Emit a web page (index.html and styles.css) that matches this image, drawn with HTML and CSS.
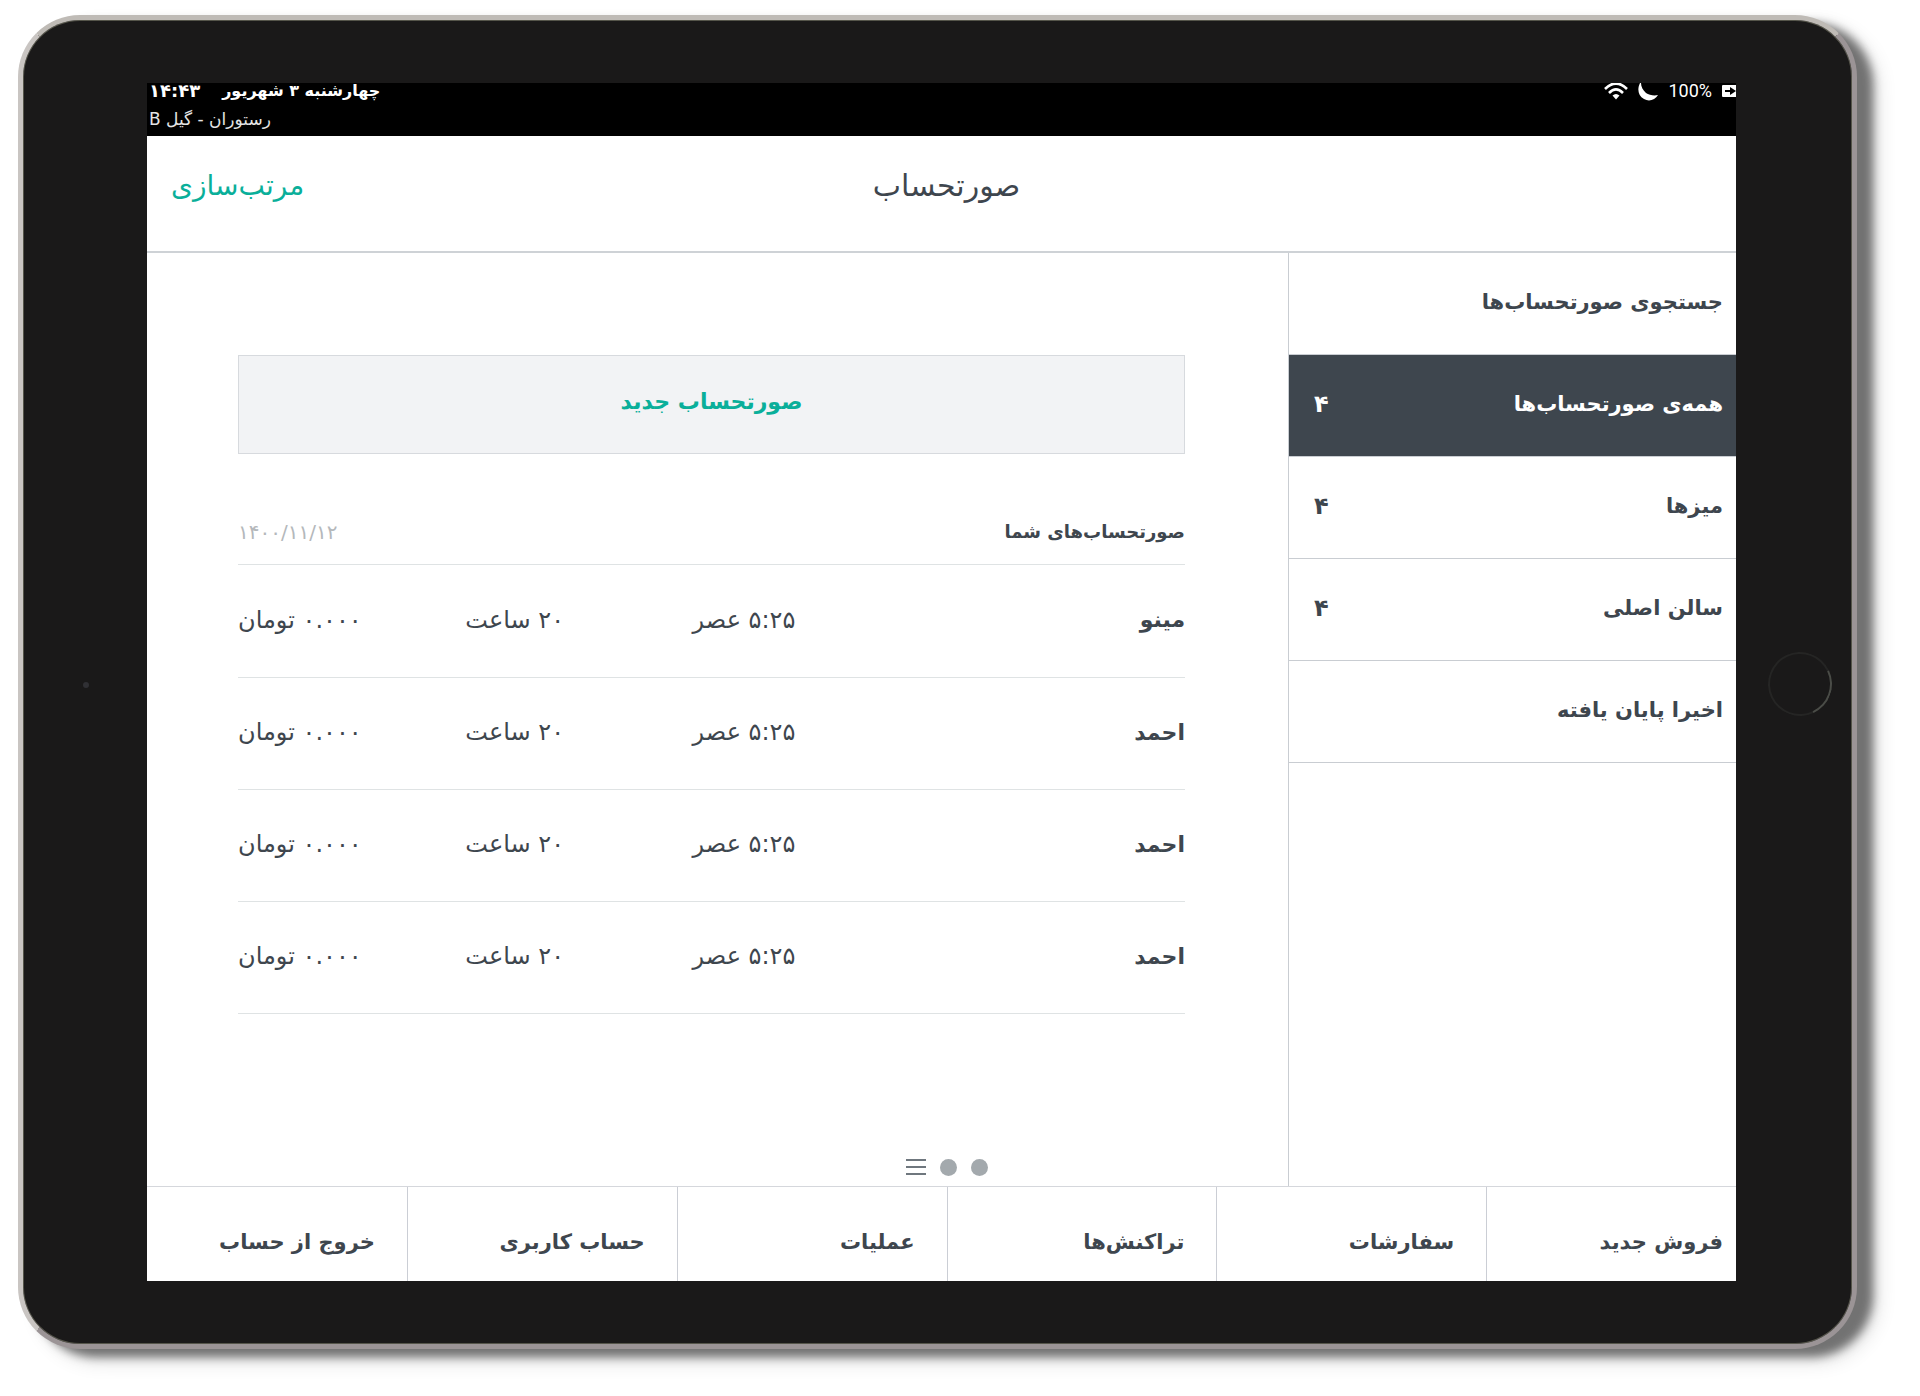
FILE: index.html
```html
<!DOCTYPE html>
<html lang="fa" dir="rtl">
<head>
<meta charset="utf-8">
<meta name="viewport" content="width=device-width, initial-scale=1">
<title>صورتحساب</title>
<link rel="stylesheet" href="styles.css">
</head>
<body>
<div class="tablet">
  <span class="camera"></span>
  <span class="home-button"></span>
  <div class="screen">
    <div class="status">
      <div class="status-icons">
        <svg class="battery" width="14" height="12" viewBox="0 0 14 12"><path fill="#fff" d="M1 0H14V12H1Q0 12 0 11V1Q0 0 1 0Z"/><path fill="#000" d="M3 5H8V2L14 6L8 10V7H3Z"/></svg>
        <span class="percent" dir="ltr">100%</span>
        <svg width="20" height="20" viewBox="0 0 20 20"><path fill="#fff" d="M2 2C-1 8 0 15 6 18C11 21 17 19 20 14C16 15 11 14 8 12C5 9 3 6 3 2Z"/></svg>
        <svg width="24" height="18" viewBox="0 0 24 18"><g fill="none" stroke="#fff" stroke-width="2.6"><path d="M1 7Q12 -4 23 7"/><path d="M5 11Q12 4 19 11"/></g><path fill="#fff" d="M8.500 13.500Q12 10.500 15.500 13.500L12 17.500Z"/></svg>
      </div>
      <div class="status-text">
        <div class="clock"><span>چهارشنبه ۳ شهریور</span><span class="time">۱۴:۴۳</span></div>
        <div class="place">رستوران - گیل B</div>
      </div>
    </div>
    <header class="topbar">
      <h1 class="title">صورتحساب</h1>
      <button class="sort" type="button">مرتب‌سازی</button>
    </header>
    <div class="content">
      <nav class="sidebar">
        <a class="side-item" href="#search">جستجوی صورتحساب‌ها</a>
        <a class="side-item active" href="#all">همه‌ی صورتحساب‌ها <span class="count">۴</span></a>
        <a class="side-item" href="#tables">میزها <span class="count">۴</span></a>
        <a class="side-item" href="#hall">سالن اصلی <span class="count">۴</span></a>
        <a class="side-item" href="#recent">اخیرا پایان یافته</a>
      </nav>
      <main class="main">
        <button class="new-bill" type="button">صورتحساب جدید</button>
        <div class="list-head">
          <h2 class="list-title">صورتحساب‌های شما</h2>
          <span class="list-date">۱۴۰۰/۱۱/۱۲</span>
        </div>
        <table class="bills">
          <tbody>
            <tr><th scope="row">مینو</th><td>۵:۲۵ عصر</td><td>۲۰ ساعت</td><td>۰.۰۰۰ تومان</td></tr>
            <tr><th scope="row">احمد</th><td>۵:۲۵ عصر</td><td>۲۰ ساعت</td><td>۰.۰۰۰ تومان</td></tr>
            <tr><th scope="row">احمد</th><td>۵:۲۵ عصر</td><td>۲۰ ساعت</td><td>۰.۰۰۰ تومان</td></tr>
            <tr><th scope="row">احمد</th><td>۵:۲۵ عصر</td><td>۲۰ ساعت</td><td>۰.۰۰۰ تومان</td></tr>
          </tbody>
        </table>
      </main>
      <div class="pager">
        <span class="dot"></span>
        <span class="dot"></span>
        <svg width="20" height="16" viewBox="0 0 20 16"><path stroke="#6f777e" stroke-width="2" d="M0 1H20M0 8H20M0 15H20"/></svg>
      </div>
    </div>
    <nav class="bottom-nav">
      <a href="#sale">فروش جدید</a>
      <a href="#orders">سفارشات</a>
      <a href="#transactions">تراکنش‌ها</a>
      <a href="#operations">عملیات</a>
      <a href="#account">حساب کاربری</a>
      <a href="#logout">خروج از حساب</a>
    </nav>
  </div>
</div>
</body>
</html>
```
FILE: styles.css
```css
* { box-sizing: border-box; }

body {
  margin: 0;
  padding: 15px 63px 46px 18px;
  background: #fff;
  color: #3e464e;
  font-family: "DejaVu Sans", sans-serif;
}

h1, h2 { margin: 0; }

a { color: inherit; text-decoration: none; }

button { font-family: inherit; cursor: pointer; }

.tablet {
  position: relative;
  padding: 63px 116px 63px 124px;
  border: 5px solid;
  border-color: #bfbbb6 #9b9496 #9b9496 #c9c5c2;
  border-radius: 62px;
  background: #1a1919;
  box-shadow: inset 0 0 0 1px #55554a, 16px 8px 10px #727272, 20px 12px 20px #ddd;
}

.home-button {
  position: absolute;
  top: 50%;
  right: 20px;
  width: 64px;
  height: 64px;
  margin-top: -30px;
  border: 2px solid #252524;
  border-right-color: #4a4c47;
  border-radius: 50%;
  transform: rotate(20deg);
}

.camera {
  position: absolute;
  top: 50%;
  left: 60px;
  width: 6px;
  height: 6px;
  border-radius: 50%;
  background: #303034;
}

.screen { overflow: hidden; background: #fff; }

.status {
  display: flex;
  justify-content: space-between;
  height: 53px;
  background: #000;
  color: #fff;
}

.status-icons {
  display: flex;
  align-items: center;
  gap: 10px;
  height: 16px;
}

.percent { font: 18px/18px Roboto, sans-serif; }

.status-text { padding-left: 2px; text-align: left; }

.clock {
  display: flex;
  justify-content: flex-end;
  gap: 22px;
  font-size: 16px;
  font-weight: 700;
  line-height: 16px;
}

.time { font-size: 18px; }

.place { margin-top: 4px; font-size: 17px; line-height: 32px; color: #e4e4e4; }

.topbar {
  display: grid;
  grid-template-columns: 1fr auto 1fr;
  align-items: center;
  height: 117px;
  padding: 0 14px 16px 24px;
  border-bottom: 2px solid #ced2d6;
}

.title { grid-column: 2; font-size: 30px; font-weight: 400; }

.sort {
  justify-self: end;
  padding: 0;
  border: 0;
  background: none;
  color: #0aaf9a;
  font-size: 28px;
}

.content { display: grid; grid-template-columns: 448px 1fr; }

.sidebar { grid-area: 1 / 1; border-left: 1px solid #c9cdd2; }

.side-item {
  display: flex;
  justify-content: space-between;
  align-items: center;
  height: 102px;
  padding: 0 13px 4px 25px;
  border-bottom: 1px solid #c9cdd2;
  font-size: 21px;
  font-weight: 700;
}

.count { font-size: 24px; }

.side-item.active { background: #3e464e; color: #fff; }

.main { grid-area: 1 / 2; padding: 102px 103px 172px 91px; }

.new-bill {
  display: block;
  width: 100%;
  height: 99px;
  padding: 0 0 6px;
  border: 1px solid #d7dade;
  background: #f2f3f5;
  color: #0aaf9a;
  font-size: 22px;
  font-weight: 700;
}

.list-head {
  display: flex;
  justify-content: space-between;
  align-items: flex-end;
  height: 111px;
  padding-bottom: 16px;
  border-bottom: 1px solid #dfe3e4;
  line-height: 32px;
}

.list-title { font-size: 18px; font-weight: 700; }

.list-date { color: #b4b8bb; font-size: 20px; }

.bills { width: 100%; table-layout: fixed; border-collapse: collapse; font-size: 24px; }

.bills th, .bills td {
  width: 24%;
  height: 112px;
  padding: 0 0 2px;
  border-bottom: 1px solid #dfe3e4;
  text-align: left;
}

.bills th { width: 28%; font-size: 22px; text-align: right; }

.pager {
  grid-area: 1 / 1 / 2 / 3;
  place-self: end center;
  display: flex;
  align-items: center;
  gap: 14px;
  padding: 0 0 10px 10px;
}

.dot { width: 17px; height: 17px; border-radius: 50%; background: #a3a9ad; }

.bottom-nav {
  display: grid;
  grid-template-columns: 250fr repeat(4, 270fr) 260fr;
  height: 95px;
  border-top: 1px solid #d5d7dc;
}

.bottom-nav a {
  display: flex;
  align-items: center;
  padding: 16px 32px 0 0;
  border-left: 1px solid #cbced5;
  font-size: 21px;
  font-weight: 700;
}

.bottom-nav a:first-child { padding-right: 13px; }

.bottom-nav a:last-child { border-left: 0; }
```
